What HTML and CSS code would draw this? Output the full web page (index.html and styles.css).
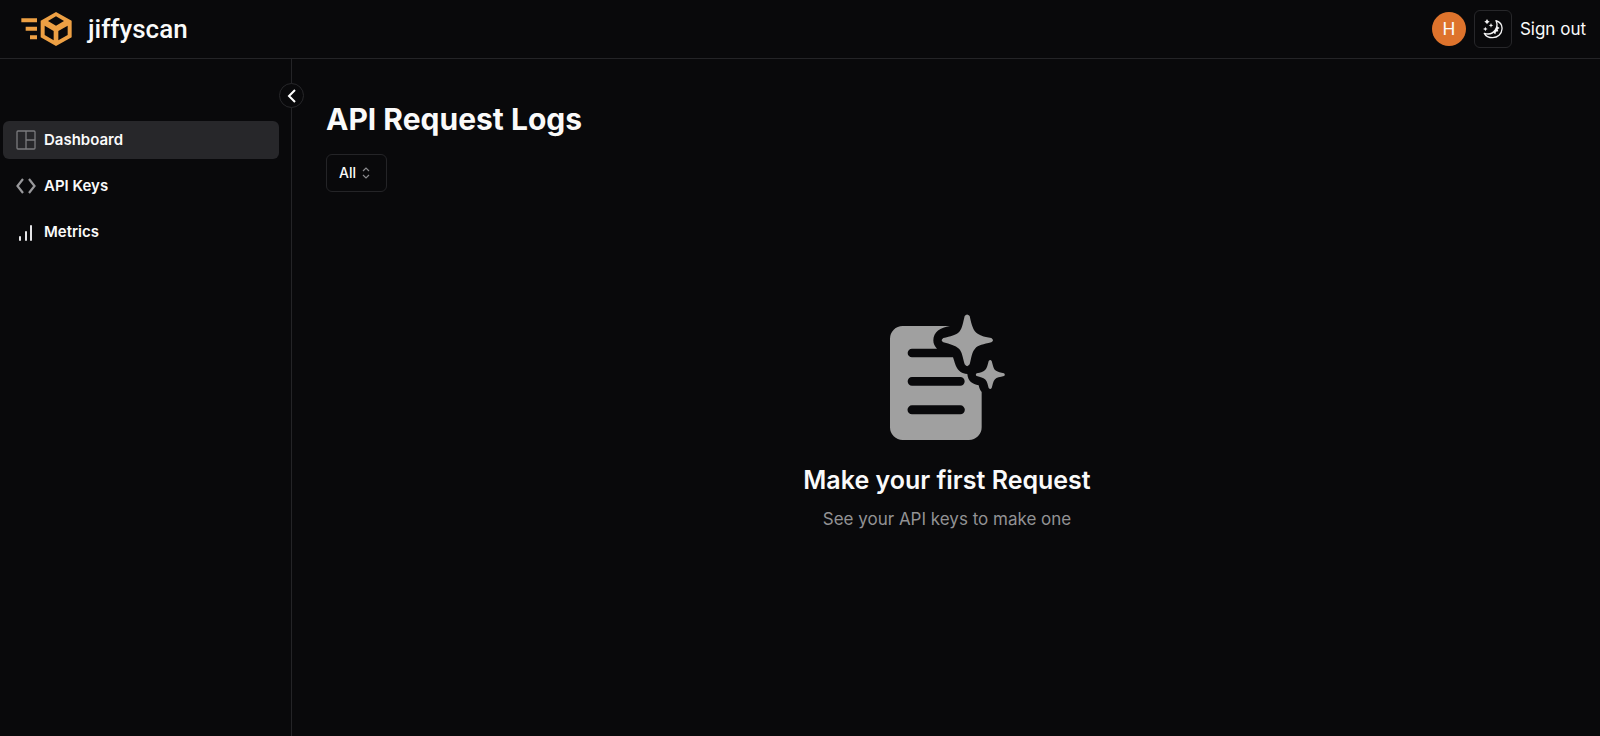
FILE: index.html
```
<!DOCTYPE html>
<html lang="en">
<head>
<meta charset="utf-8">
<meta name="viewport" content="width=device-width, initial-scale=1">
<title>jiffyscan</title>
<link rel="stylesheet" href="styles.css">
</head>
<body>
<header class="topbar">
  <a class="brand" href="#">
    <svg class="brand-mark" viewBox="63 35 153 102" fill="#eda044" aria-hidden="true">
      <path d="M64 54h47v12H64zM77 79h34v12H77zM90 105h21v12H90z"/>
      <path fill-rule="evenodd" d="M168 35l47 26v50l-47 26-46-26V61zM168 48l-24 14 24 14 24-14zM134 76v28l27 16V92zM203 76l-28 16v28l28-16z"/>
    </svg>
    <span>jiffyscan</span>
  </a>
  <div class="actions">
    <span class="avatar">H</span>
    <button class="icon-button" type="button" aria-label="Toggle theme">
      <svg class="theme-icon" viewBox="0 0 60 60" fill="none" stroke="#f4f4f5" stroke-width="4" stroke-linejoin="round" aria-hidden="true">
        <path d="M39 5C51 9 58 18 57 30 56 46 44 56 29 56 18 56 8 51 4 43 17 47 30 43 37 33 43 24 43 13 39 5z"/>
        <path fill="#f4f4f5" stroke="none" d="M42 22l8 5-6 4 2 6-7 1-2 8-6-5z"/>
        <path fill="#f4f4f5" stroke="none" d="M12 0l3 5 5 3-5 3-3 5-3-5-5-3 5-3zM24 12l2 5 5 2-5 2-2 5-2-5-5-2 5-2zM7 23l2 5 5 2-5 2-2 5-2-5-5-2 5-2z"/>
      </svg>
    </button>
    <button class="sign-out" type="button">Sign out</button>
  </div>
</header>
<div class="shell">
  <aside class="sidebar">
    <button class="collapse" type="button" aria-label="Collapse sidebar">
      <svg viewBox="0 0 10 16" fill="none" stroke="#fff" stroke-width="2" aria-hidden="true"><path d="M8 2L2 8l6 6"/></svg>
    </button>
    <nav class="nav">
      <a class="nav-link active" href="#">
        <svg viewBox="0 0 20 20" fill="none" stroke="#7b7b7e" stroke-width="1.300" aria-hidden="true"><rect x="1" y="1" width="18" height="18" rx="1"/><path d="M10 1v18M10 10h9"/></svg>
        Dashboard
      </a>
      <a class="nav-link" href="#">
        <svg viewBox="0 0 20 20" fill="none" stroke="#98989b" stroke-width="2.200" aria-hidden="true"><path d="M7 3L1.500 10 7 17M13 3l5.500 7-5.500 7"/></svg>
        API Keys
      </a>
      <a class="nav-link" href="#">
        <svg viewBox="0 0 20 20" fill="none" stroke="#e4e4e7" stroke-width="2" stroke-linecap="round" aria-hidden="true"><path d="M4 15v3M10 10v8M15 4v14"/></svg>
        Metrics
      </a>
    </nav>
  </aside>
  <main class="content">
    <h1>API Request Logs</h1>
    <button class="filter" type="button" aria-haspopup="listbox">
      All
      <svg viewBox="0 0 8 12" fill="none" stroke="#8a8a8d" stroke-width="1.200" aria-hidden="true"><path d="M1 4l3-3 3 3M1 8l3 3 3-3"/></svg>
    </button>
    <section class="empty">
      <svg class="empty-icon" viewBox="60 41 345 381" fill="#a0a0a0" aria-hidden="true">
        <path fill-rule="evenodd" d="M98 77H240C211 81 190 95 190 120 190 130 194 138 201 145H126a13 13 0 0 0 0 26H249C256 190 259 219 292 221 294 243 307 251 326 255 328 263 330 270 335 275V381A38 38 0 0 1 297 419H98A38 38 0 0 1 60 381V115A38 38 0 0 1 98 77zM126 230a13 13 0 0 0 0 26H271a13 13 0 0 0 0-26zM126 315a13 13 0 0 0 0 27H271a13 13 0 0 0 0-27z"/>
        <path d="M284 47Q291 38 299 47C305 74 309 91 323 100 334 107 346 110 364 113Q374 120 364 126C340 132 325 134 315 145 305 155 304 175 299 192Q291 203 284 192C278 170 276 154 267 145 256 136 240 131 220 126Q210 120 220 113C242 107 258 105 268 94 277 84 279 67 284 47z"/>
        <path d="M356 182Q361 176 365 182C370 199 371 207 378 211 384 215 392 216 402 219Q407 223 402 227C390 230 380 231 375 237 369 243 368 255 365 263Q361 269 356 263C352 249 351 242 345 237 340 232 331 230 320 227Q315 223 320 219C333 216 341 214 346 208 351 203 353 194 356 182z"/>
      </svg>
      <h2>Make your first Request</h2>
      <p>See your API keys to make one</p>
    </section>
  </main>
</div>
</body>
</html>
```
FILE: styles.css
```
* { box-sizing: border-box; }
body {
  margin: 0;
  min-height: 100vh;
  display: flex;
  flex-direction: column;
  background: #09090b;
  color: #fafafa;
  font-family: Inter, "Liberation Sans", sans-serif;
}
h1, h2, p { margin: 0; }
button { font: inherit; color: inherit; background: none; border: 0; padding: 0; }
a { color: inherit; text-decoration: none; }
svg { display: block; flex: none; }

.topbar {
  display: flex;
  align-items: center;
  justify-content: space-between;
  padding: 10px 14px 10px 21px;
  border-bottom: 1px solid #242427;
}
.brand {
  display: flex;
  align-items: center;
  gap: 16px;
  font: 500 26px/32px Roboto, sans-serif;
}
.brand-mark { width: 51px; height: 34px; }
.actions { display: flex; align-items: center; gap: 8px; }
.avatar {
  display: grid;
  place-items: center;
  width: 34px;
  height: 34px;
  border-radius: 50%;
  background: #de732c;
  font: 400 18px/24px Roboto, sans-serif;
}
.icon-button {
  display: grid;
  place-items: center;
  width: 38px;
  height: 38px;
  border: 1px solid #27272a;
  border-radius: 6px;
}
.theme-icon { width: 20px; height: 20px; }
.sign-out { font-size: 17px; line-height: 24px; font-weight: 400; }

.shell { flex: 1; display: flex; }
.sidebar {
  position: relative;
  width: 292px;
  flex: none;
  padding: 62px 12px 0 3px;
  border-right: 1px solid #242427;
}
.collapse {
  position: absolute;
  top: 24px;
  right: -13px;
  display: grid;
  place-items: center;
  width: 25px;
  height: 25px;
  border: 1px solid #27272a;
  border-radius: 50%;
  background: #09090b;
}
.collapse svg { width: 10px; height: 16px; }
.nav { display: flex; flex-direction: column; gap: 8px; }
.nav-link {
  display: flex;
  align-items: center;
  gap: 8px;
  height: 38px;
  padding: 0 13px;
  border-radius: 6px;
  font-size: 15px;
  line-height: 20px;
  font-weight: 600;
}
.nav-link.active { background: #27272a; }
.nav-link svg { width: 20px; height: 20px; }

.content {
  flex: 1;
  display: flex;
  flex-direction: column;
  align-items: flex-start;
  padding: 40px 32px 32px 34px;
}
h1 { font-size: 30px; line-height: 40px; font-weight: 700; }
.filter {
  display: flex;
  align-items: center;
  gap: 6px;
  height: 38px;
  margin-top: 15px;
  padding: 0 16px 0 12px;
  border: 1px solid #242427;
  border-radius: 6px;
  font-size: 14px;
  line-height: 20px;
  font-weight: 500;
}
.filter svg { width: 8px; height: 12px; }
.empty {
  align-self: stretch;
  display: flex;
  flex-direction: column;
  align-items: center;
  padding-top: 122px;
  text-align: center;
}
.empty-icon { width: 115px; height: 127px; }
h2 { margin-top: 21px; font-size: 25px; line-height: 36px; font-weight: 600; }
p { margin-top: 8px; color: #929294; font-size: 17px; line-height: 26px; font-weight: 400; }
```
